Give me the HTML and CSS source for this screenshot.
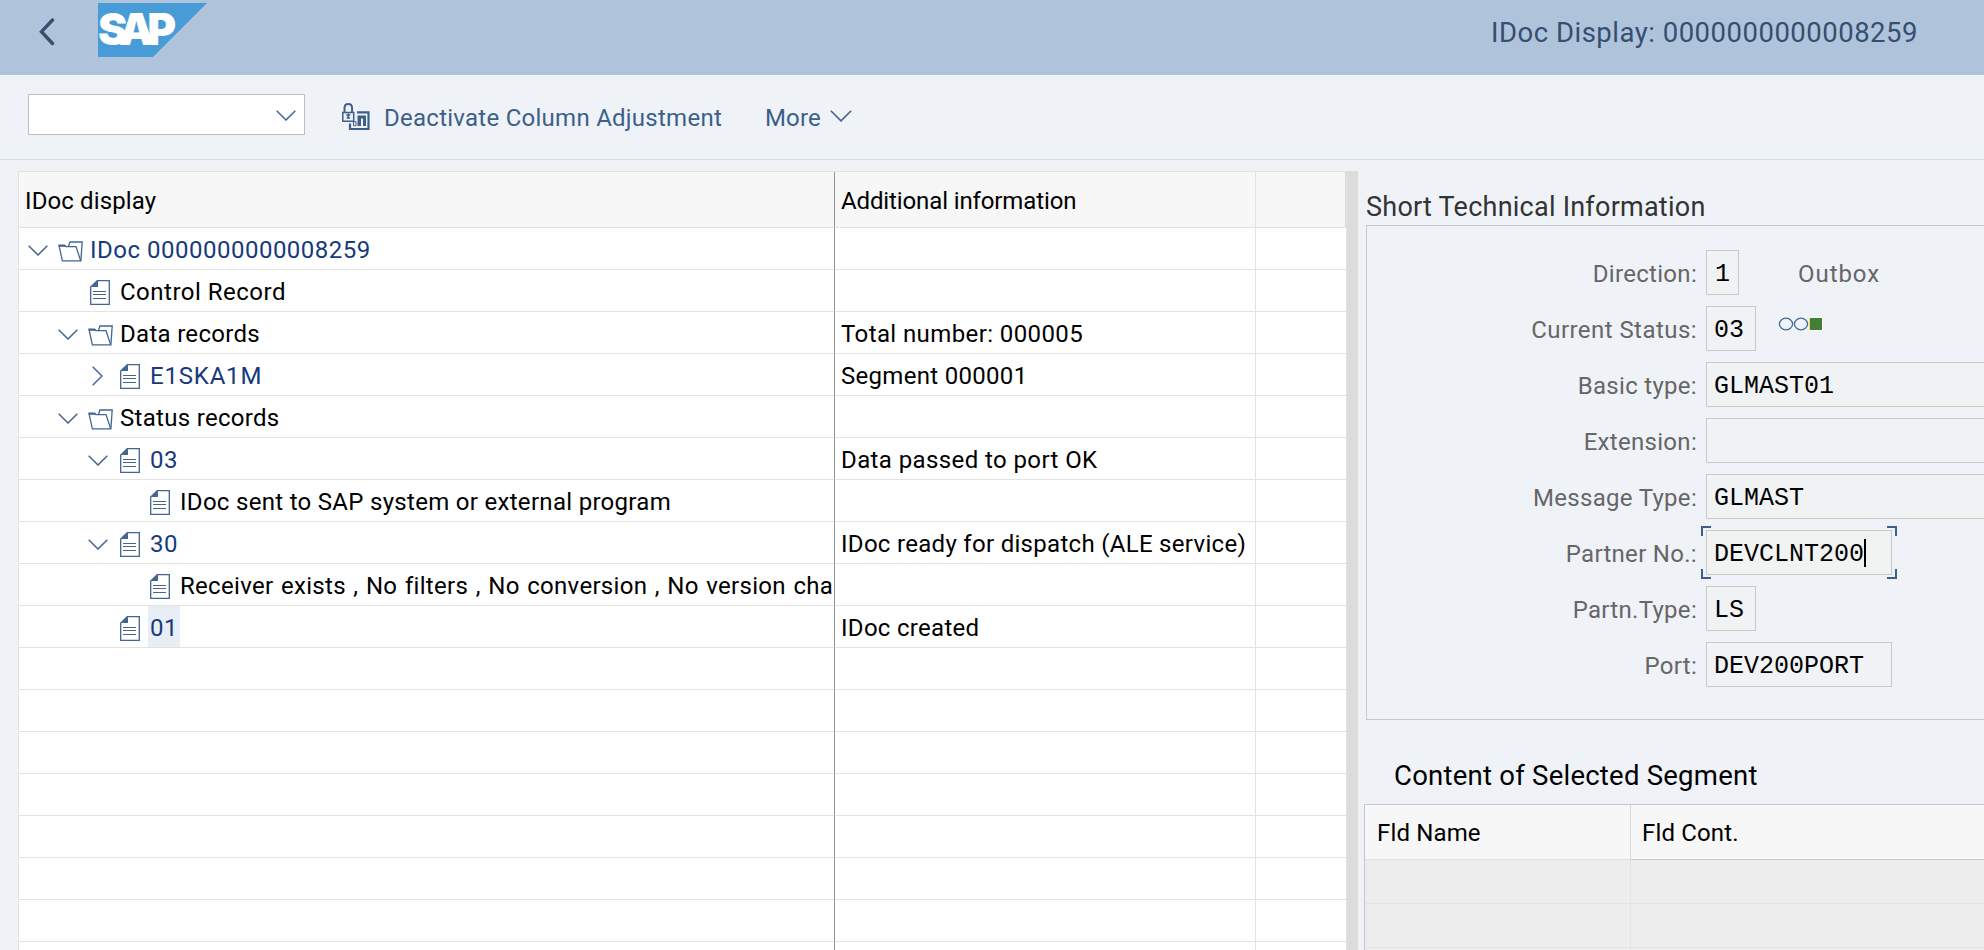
FILE: index.html
```html
<!DOCTYPE html>
<html lang="en">
<head>
<meta charset="utf-8">
<title>IDoc Display: 0000000000008259</title>
<link rel="stylesheet" href="styles.css">
</head>
<body>
<svg class="defs" aria-hidden="true">
  <symbol id="down" viewBox="0 0 20 11"><path d="M.7.7 10 10 19.3.7" fill="none" stroke="currentColor" stroke-width="1.5"/></symbol>
  <symbol id="right" viewBox="0 0 11 20"><path d="M.7.7 10 10 .7 19.3" fill="none" stroke="currentColor" stroke-width="1.5"/></symbol>
  <symbol id="folder" viewBox="0 0 25 21"><path d="M10.5 5.3 12 1h12.2l-1.3 18.6" fill="none" stroke="currentColor" stroke-width="1.3"/><path d="M1 4.6 4.4 19.8H22.7L18 5.6H8L7.2 4.6z" fill="none" stroke="currentColor" stroke-width="1.3"/><path d="M.2 3.4H6.8L8 5.8H1.3z" fill="currentColor"/></symbol>
  <symbol id="doc" viewBox="0 0 20 25"><path d="M7.3.6H19.3V24.4H.7V7z" fill="none" stroke="currentColor" stroke-width="1.3"/><path d="M8 .6V7H.6z" fill="currentColor"/><path d="M3 11.5H16M3 14.5H16M3 18.5H16" stroke="currentColor" stroke-width="1"/></symbol>
</svg>

<header class="shell">
  <svg class="back" viewBox="0 0 16 28"><path d="M13.5 2 2.5 13.7 13.5 25.5" fill="none" stroke="currentColor" stroke-width="3.4" stroke-linecap="round"/></svg>
  <svg class="logo" viewBox="0 0 109 54"><path d="M0 0H109L55 54H0z" fill="#479cd8"/><text x="0" y="41.5" textLength="78" lengthAdjust="spacing" class="logo-text">SAP</text></svg>
  <h1 class="title">IDoc Display: 0000000000008259</h1>
</header>

<nav class="toolbar">
  <div class="command"><svg class="chev"><use href="#down"/></svg></div>
  <div class="action">
    <svg class="lock" viewBox="0 0 28 28"><path d="M2.5 9.5V5.2Q2.5 1 6.3 1t3.8 4.2V9.5" fill="none" stroke="currentColor" stroke-width="2"/><path d="M.8 9.5H11.7V18.2H.8z" fill="none" stroke="currentColor" stroke-width="1.5"/><path d="M6.3 10.5v5M4.3 12h4M4.6 15h3.4" stroke="currentColor" stroke-width="1.6"/><path d="M8 20.5V26H26.5V9.4H15" fill="none" stroke="currentColor" stroke-width="2.2"/><path d="M11.5 18.7h2.5v4h-2.5z" fill="none" stroke="currentColor"/><path d="M15.5 23V12.5h8.5V23h-3V15.5h-2V23z" fill="currentColor"/></svg>
    <span>Deactivate Column Adjustment</span>
  </div>
  <div class="action more"><span>More</span><svg class="chev wide"><use href="#down"/></svg></div>
</nav>

<main class="work">
  <section class="tree">
    <div class="row head"><div class="cell tight">IDoc display</div><div class="cell snug">Additional information</div><div class="cell"></div></div>
    <div class="row"><div class="cell l0"><i class="slot"><svg class="chev"><use href="#down"/></svg></i><i class="slot"><svg class="folder"><use href="#folder"/></svg></i><span class="node link digits">IDoc 0000000000008259</span></div><div class="cell"></div><div class="cell"></div></div>
    <div class="row"><div class="cell l1"><i class="slot"></i><i class="slot doc-slot"><svg class="doc"><use href="#doc"/></svg></i><span class="node digits">Control Record</span></div><div class="cell"></div><div class="cell"></div></div>
    <div class="row"><div class="cell l1"><i class="slot"><svg class="chev"><use href="#down"/></svg></i><i class="slot"><svg class="folder"><use href="#folder"/></svg></i><span class="node">Data records</span></div><div class="cell total">Total number: 000005</div><div class="cell"></div></div>
    <div class="row"><div class="cell l2"><i class="slot"><svg class="chev-r"><use href="#right"/></svg></i><i class="slot doc-slot"><svg class="doc"><use href="#doc"/></svg></i><span class="node link caps">E1SKA1M</span></div><div class="cell">Segment 000001</div><div class="cell"></div></div>
    <div class="row"><div class="cell l1"><i class="slot"><svg class="chev"><use href="#down"/></svg></i><i class="slot"><svg class="folder"><use href="#folder"/></svg></i><span class="node">Status records</span></div><div class="cell"></div><div class="cell"></div></div>
    <div class="row"><div class="cell l2"><i class="slot"><svg class="chev"><use href="#down"/></svg></i><i class="slot doc-slot"><svg class="doc"><use href="#doc"/></svg></i><span class="node link digits">03</span></div><div class="cell total">Data passed to port OK</div><div class="cell"></div></div>
    <div class="row"><div class="cell l3"><i class="slot"></i><i class="slot doc-slot"><svg class="doc"><use href="#doc"/></svg></i><span class="node">IDoc sent to SAP system or external program</span></div><div class="cell"></div><div class="cell"></div></div>
    <div class="row"><div class="cell l2"><i class="slot"><svg class="chev"><use href="#down"/></svg></i><i class="slot doc-slot"><svg class="doc"><use href="#doc"/></svg></i><span class="node link digits">30</span></div><div class="cell">IDoc ready for dispatch (ALE service)</div><div class="cell"></div></div>
    <div class="row"><div class="cell l3"><i class="slot"></i><i class="slot doc-slot"><svg class="doc"><use href="#doc"/></svg></i><span class="node roomy">Receiver exists , No filters , No conversion , No version change</span></div><div class="cell"></div><div class="cell"></div></div>
    <div class="row"><div class="cell l2"><i class="slot"></i><i class="slot doc-slot"><svg class="doc"><use href="#doc"/></svg></i><span class="node link digits current">01</span></div><div class="cell">IDoc created</div><div class="cell"></div></div>
    <div class="row"><div class="cell"></div><div class="cell"></div><div class="cell"></div></div>
    <div class="row"><div class="cell"></div><div class="cell"></div><div class="cell"></div></div>
    <div class="row"><div class="cell"></div><div class="cell"></div><div class="cell"></div></div>
    <div class="row"><div class="cell"></div><div class="cell"></div><div class="cell"></div></div>
    <div class="row"><div class="cell"></div><div class="cell"></div><div class="cell"></div></div>
    <div class="row"><div class="cell"></div><div class="cell"></div><div class="cell"></div></div>
    <div class="row"><div class="cell"></div><div class="cell"></div><div class="cell"></div></div>
    <div class="row"><div class="cell"></div><div class="cell"></div><div class="cell"></div></div>
  </section>

  <div class="splitter"></div>

  <section class="details">
    <h2 class="group-title">Short Technical Information</h2>
    <div class="group">
      <div class="field"><label>Direction:</label><div class="input w1"><span>1</span></div><span class="note">Outbox</span></div>
      <div class="field"><label class="wide-label">Current Status:</label><div class="input w2"><span>03</span></div>
        <svg class="lights" viewBox="0 0 46 15"><ellipse cx="8" cy="7" rx="6.6" ry="5.8" fill="none" stroke="#46699b" stroke-width="1.3"/><ellipse cx="23" cy="7" rx="6.6" ry="5.8" fill="none" stroke="#46699b" stroke-width="1.3"/><path d="M31 0H45V14H31z" fill="#fff"/><path d="M31.2 1h1v12h-1z" fill="#f3d14b"/><path d="M32 1H44V13H32z" fill="#427f33"/></svg></div>
      <div class="field"><label>Basic type:</label><div class="input long"><span>GLMAST01</span></div></div>
      <div class="field"><label>Extension:</label><div class="input long"></div></div>
      <div class="field"><label>Message Type:</label><div class="input long"><span>GLMAST</span></div></div>
      <div class="field"><label>Partner No.:</label><div class="input w10 focused"><span>DEVCLNT200</span><b class="caret"></b><b class="corner tl"></b><b class="corner tr"></b><b class="corner bl"></b><b class="corner br"></b></div></div>
      <div class="field"><label>Partn.Type:</label><div class="input w2"><span>LS</span></div></div>
      <div class="field"><label>Port:</label><div class="input w10"><span>DEV200PORT</span></div></div>
    </div>
    <h2 class="segment-title">Content of Selected Segment</h2>
    <div class="grid">
      <div class="gcell ghead">Fld Name</div><div class="gcell ghead last">Fld Cont.</div>
      <div class="gcell"></div><div class="gcell"></div>
      <div class="gcell"></div><div class="gcell"></div>
      <div class="gcell"></div><div class="gcell"></div>
    </div>
  </section>
</main>
</body>
</html>
```
FILE: styles.css
```css
* { box-sizing: border-box; }
body {
  margin: 0;
  width: 1984px;
  height: 950px;
  overflow: hidden;
  display: flex;
  flex-direction: column;
  background: #eff3f8;
  color: #000;
  font: 24px/28px Roboto, "Liberation Sans", sans-serif;
  letter-spacing: .3px;
}
svg { display: block; flex: none; }
.defs { display: none; }
h1, h2 { margin: 0; font-weight: 400; }
.digits { letter-spacing: .5px; }
.total { letter-spacing: .4px; }
.tight { letter-spacing: .12px; }
.snug { letter-spacing: -.12px; }
.caps { letter-spacing: .8px; }
.roomy { word-spacing: 1.3px; }

/* Shell bar */
.shell {
  flex: none;
  height: 75px;
  padding: 3px 66px 0 39px;
  display: flex;
  align-items: flex-start;
  background: #afc4db;
  color: #354f70;
}
.back { width: 16px; height: 28px; margin: 15px 43px 0 0; }
.logo { width: 109px; height: 54px; }
.logo-text { font: 900 44px Inter, sans-serif; letter-spacing: 0; fill: #fff; }
.title { margin: 14px 0 0 auto; font-size: 27.5px; line-height: 32px; letter-spacing: .5px; }

/* Toolbar */
.toolbar {
  flex: none;
  height: 85px;
  padding: 19px 28px 0;
  display: flex;
  align-items: flex-start;
  border-bottom: 1px solid #d3deea;
  color: #3d5f8a;
}
.command {
  width: 277px;
  height: 41px;
  padding: 2px 8px 0 0;
  display: flex;
  align-items: center;
  justify-content: flex-end;
  background: #fff;
  border: 1px solid #bfbfbf;
}
.chev { width: 20px; height: 11px; color: #436590; }
.wide { width: 22px; height: 12px; }
.lock { width: 28px; height: 28px; margin-right: 14px; }
.action { height: 45px; margin-left: 37px; display: flex; align-items: center; letter-spacing: .26px; }
.action span { padding-top: 2px; }
.more { margin-left: 43px; letter-spacing: .15px; }
.more .chev { margin: 0 0 1px 9px; }

/* Work area */
.work { flex: 1; min-height: 0; display: flex; padding: 11px 0 0 18px; }
.tree {
  flex: none;
  width: 1329px;
  overflow: hidden;
  background: #fff;
  border: solid #e2e2e2;
  border-width: 1px 1px 0;
}
.row { display: grid; grid-template-columns: 816px 421px 1fr; height: 42px; }
.cell {
  min-width: 0;
  overflow: hidden;
  padding: 3px 0 0 6px;
  display: flex;
  align-items: center;
  white-space: nowrap;
  border-right: 1px solid #e2e2e2;
  border-bottom: 1px solid #e2e2e2;
}
.cell:first-child { border-right-color: #929292; }
.cell:last-child { border-right: 0; }
.head { height: 56px; background: #f7f7f7; }
.head .cell:last-child { border-right: 1px solid #d9d9d9; }
.l0 { padding-left: 9px; }
.l1 { padding-left: 39px; }
.l2 { padding-left: 69px; }
.l3 { padding-left: 99px; }
.slot { flex: none; width: 30px; display: flex; color: #436590; }
.doc-slot { padding-left: 2px; }
.folder { width: 25px; height: 21px; margin-top: 2px; }
.doc { width: 20px; height: 25px; }
.chev-r { width: 11px; height: 20px; margin-left: 4px; }
.node { padding: 0 2px; }
.link { color: #163a7d; }
.current { height: 41px; margin-top: -3px; padding-top: 8px; width: 32px; background: #e8eef6; }
.splitter { flex: none; width: 11px; background: #dcdcdc; }

/* Technical details */
.details { flex: 1; min-width: 0; overflow: hidden; }
.group-title { height: 54px; padding: 18px 0 0 8px; font-size: 27px; line-height: 36px; color: #333; letter-spacing: .24px; }
.group {
  width: 640px;
  height: 495px;
  margin-left: 8px;
  padding-top: 24px;
  display: flex;
  flex-direction: column;
  gap: 11px;
  border: 1px solid #c5c8cb;
}
.field { height: 45px; display: flex; align-items: center; white-space: nowrap; }
.field label { flex: none; width: 330px; margin-right: 9px; padding: 2px 0 0; text-align: right; color: #666; }
.field .wide-label { letter-spacing: .45px; }
.note { margin: 2px 0 0 59px; color: #666; letter-spacing: .95px; }
.input {
  flex: none;
  height: 45px;
  padding: 1px 0 0 7px;
  display: flex;
  align-items: center;
  background: #f1f2f4;
  border: 1px solid #c6c8ca;
  font-family: "Liberation Mono", monospace;
  font-size: 25px;
  letter-spacing: 0;
}
.input span { padding-top: 4px; }
.w1 { width: 33px; padding-left: 8px; }
.w2 { width: 50px; }
.w10 { width: 186px; }
.long { width: 320px; }
.lights { width: 46px; height: 15px; margin: 0 0 8px 22px; }
.focused { position: relative; background: #f1f3f2; }
.caret { width: 2px; height: 28px; background: #000; }
.corner { position: absolute; width: 10px; height: 10px; border: 0 solid #3d5f8a; }
.tl { left: -6px; top: -5px; border-width: 2px 0 0 2px; }
.tr { right: -6px; top: -5px; border-width: 2px 2px 0 0; }
.bl { left: -6px; bottom: -5px; border-width: 0 0 2px 2px; }
.br { right: -6px; bottom: -5px; border-width: 0 2px 2px 0; }

/* Segment table */
.segment-title { height: 84px; padding: 38px 0 0 36px; font-size: 27.5px; line-height: 36px; letter-spacing: .24px; }
.grid {
  width: 640px;
  margin-left: 6px;
  display: grid;
  grid-template-columns: 266px 1fr;
  grid-template-rows: 55px 44px 44px 44px;
  border: solid #c5c6c8;
  border-width: 1px 0 0 1px;
}
.gcell { padding: 0 12px; background: #ededed; border: solid #e3e3e3; border-width: 0 1px 1px 0; }
.ghead { padding-top: 14px; background: #f7f7f7; border-right-color: #d9d9d9; letter-spacing: .15px; }
.last { border-bottom-color: #c8c8ca; padding-left: 11px; }
```
